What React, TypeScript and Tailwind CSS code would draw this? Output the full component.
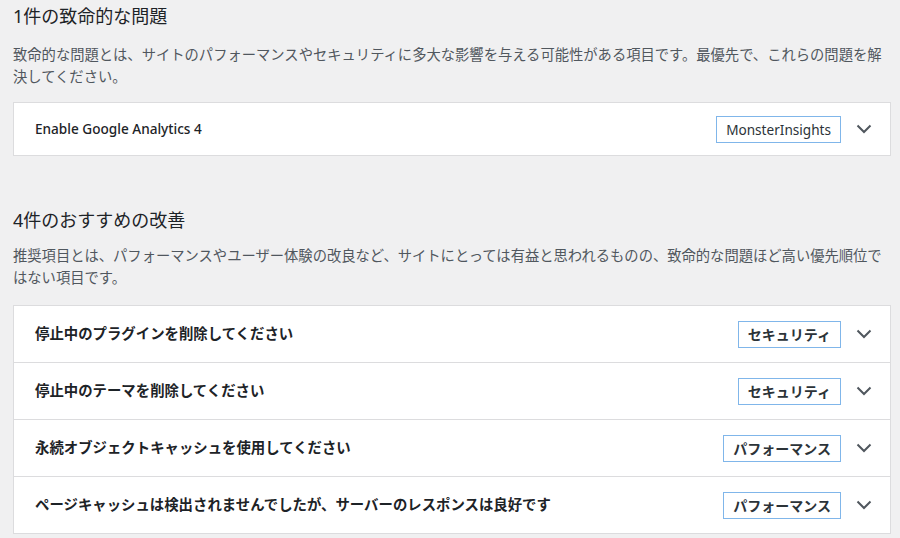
import React from 'react';

type Item = { title: string; badge: string };

const critical: Item[] = [{ title: 'Enable Google Analytics 4', badge: 'MonsterInsights' }];

const recommended: Item[] = [
  { title: '停止中のプラグインを削除してください', badge: 'セキュリティ' },
  { title: '停止中のテーマを削除してください', badge: 'セキュリティ' },
  { title: '永続オブジェクトキャッシュを使用してください', badge: 'パフォーマンス' },
  { title: 'ページキャッシュは検出されませんでしたが、サーバーのレスポンスは良好です', badge: 'パフォーマンス' },
];

function Chevron() {
  return (
    <svg width="16" height="10" viewBox="0 0 16 10" fill="none">
      <path d="M1.5 1.5 L8 8 L14.5 1.5" stroke="#50575e" strokeWidth="2" />
    </svg>
  );
}

function Row({ item, first, height, latin }: { item: Item; first: boolean; height: string; latin?: boolean }) {
  return (
    <div className={`flex items-center pl-[21px] pr-[15px] ${height} ${first ? '' : 'border-t border-[#dcdcde]'}`}>
      <span className={`flex-1 text-[#1d2327] ${latin ? 'text-[13.6px] font-medium' : 'text-[14.4px] font-semibold'}`}>
        {item.title}
      </span>
      <span
        className={`border border-[#80b6ea] px-[9px] py-[2px] leading-[21px] text-[#2c3338] ${latin ? 'text-[13.6px] font-normal' : 'text-[14px] font-semibold'}`}
      >
        {item.badge}
      </span>
      <button className="ml-[12px] flex h-[26px] w-[22px] items-center justify-center">
        <Chevron />
      </button>
    </div>
  );
}

export default function App() {
  return (
    <div
      className="min-h-[538px] w-[900px] bg-[#f0f0f1] px-[13px] pr-[9px] text-[#1d2327]"
      style={{ fontFamily: '"Noto Sans", "Noto Sans CJK JP", sans-serif' }}
    >
      <h2 className="pt-[4px] text-[18px] font-normal leading-[25px]">1件の致命的な問題</h2>
      <p className="mt-[15px] text-[14.3px] leading-[22px] text-[#50575e]">
        致命的な問題とは、サイトのパフォーマンスやセキュリティに多大な影響を与える可能性がある項目です。最優先で、これらの問題を解決してください。
      </p>
      <div className="mt-[14px] border border-[#dcdcde] bg-white">
        {critical.map((it, i) => (
          <Row key={it.title} item={it} first={i === 0} height="h-[52px]" latin />
        ))}
      </div>

      <h2 className="mt-[52px] text-[18px] font-normal leading-[25px]">4件のおすすめの改善</h2>
      <p className="mt-[12px] text-[14.3px] leading-[22px] text-[#50575e]">
        推奨項目とは、パフォーマンスやユーザー体験の改良など、サイトにとっては有益と思われるものの、致命的な問題ほど高い優先順位ではない項目です。
      </p>
      <div className="mt-[16px] border border-[#dcdcde] bg-white">
        {recommended.map((it, i) => (
          <Row key={it.title} item={it} first={i === 0} height={i === 0 ? 'h-[56px]' : 'h-[57px]'} />
        ))}
      </div>
    </div>
  );
}
